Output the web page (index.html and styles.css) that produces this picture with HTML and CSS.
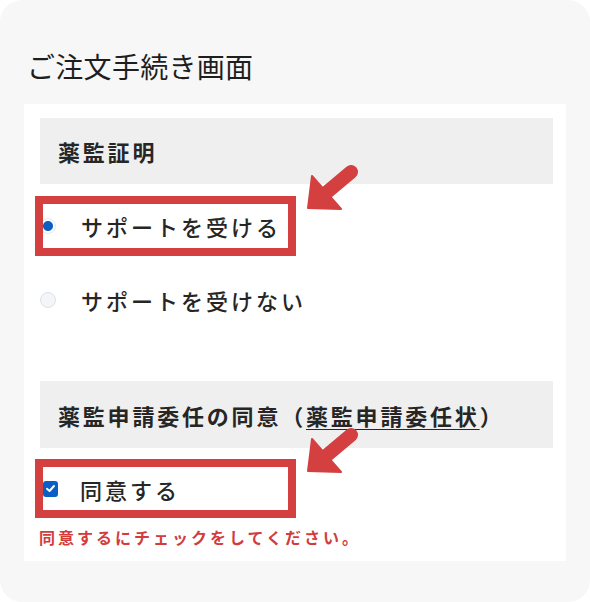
FILE: index.html
```html
<!DOCTYPE html>
<html lang="ja">
<head>
    <meta charset="UTF-8">
    <meta name="viewport" content="width=device-width, initial-scale=1.0">
    <title>ご注文手続き画面</title>
    <link rel="stylesheet" href="styles.css">
</head>
<body>
    <div class="screen">
        <h1 class="page-title">ご注文手続き画面</h1>

        <div class="panel">
            <!-- 薬監証明 -->
            <section class="block">
                <h2 class="block-title">薬監証明</h2>
                <label class="choice marked">
                    <input type="radio" name="support" class="radio" checked>
                    <span class="choice-text">サポートを受ける</span>
                    <svg class="pointer" width="54" height="50" viewBox="0 0 54 50">
                        <line x1="20" y1="30" x2="45" y2="9" stroke="#d43f3f" stroke-width="14" stroke-linecap="round"/>
                        <polygon points="2,45 6,13 35,46" fill="#d43f3f" stroke="#d43f3f" stroke-width="2" stroke-linejoin="round"/>
                    </svg>
                </label>
                <label class="choice">
                    <input type="radio" name="support" class="radio">
                    <span class="choice-text">サポートを受けない</span>
                </label>
            </section>

            <!-- 委任の同意 -->
            <section class="block block-agree">
                <h2 class="block-title">薬監申請委任の同意（<a href="#" class="doc-link">薬監申請委任状</a>）</h2>
                <label class="choice choice-check marked">
                    <span class="checkbox">
                        <svg width="11" height="11" viewBox="0 0 11 11">
                            <polyline points="2,5.8 4.5,8 9,3" fill="none" stroke="#fff" stroke-width="2" stroke-linecap="round" stroke-linejoin="round"/>
                        </svg>
                    </span>
                    <span class="choice-text">同意する</span>
                    <svg class="pointer" width="54" height="50" viewBox="0 0 54 50">
                        <line x1="20" y1="30" x2="45" y2="9" stroke="#d43f3f" stroke-width="14" stroke-linecap="round"/>
                        <polygon points="2,45 6,13 35,46" fill="#d43f3f" stroke="#d43f3f" stroke-width="2" stroke-linejoin="round"/>
                    </svg>
                </label>
                <p class="error">同意するにチェックをしてください。</p>
            </section>
        </div>
    </div>
</body>
</html>
```

FILE: styles.css
```css
:root {
    --text-color: #222;
    --screen-bg: #f7f7f7;
    --head-bg: #efefef;
    --mark-red: #d43f3f;
    --check-blue: #0b5ec4;
}

body {
    margin: 0;
    background: #fff;
    font-family: "Noto Sans CJK JP", "Noto Sans", sans-serif;
    color: var(--text-color);
}

.screen {
    width: 590px;
    height: 602px;
    box-sizing: border-box;
    padding-top: 46px;
    background: var(--screen-bg);
    border-radius: 22px;
    overflow: hidden;
}

.page-title {
    margin: 0 0 18px 27px;
    font-size: 28px;
    font-weight: 400;
    line-height: 40px;
    letter-spacing: 0.3px;
    color: #1e1e1e;
}

.panel {
    margin-left: 24px;
    width: 542px;
    box-sizing: border-box;
    padding: 14px 13px 14px 16px;
    background: #fff;
}

.block-agree {
    margin-top: 51px;
}

.block-title {
    margin: 0;
    height: 66px;
    display: flex;
    align-items: center;
    padding-left: 18px;
    background: var(--head-bg);
    font-size: 22px;
    font-weight: 700;
    letter-spacing: 2.8px;
    color: #262626;
}

.block-agree .block-title {
    height: 67px;
}

.doc-link {
    color: inherit;
    text-decoration: underline;
    text-underline-offset: 4px;
    text-decoration-thickness: 1px;
}

.choice {
    position: relative;
    display: flex;
    align-items: center;
    height: 60px;
    margin-top: 14px;
    cursor: pointer;
}

.block-title + .choice {
    margin-top: 12px;
}

.block-agree .block-title + .choice {
    margin-top: 11px;
    height: 59px;
}

.choice-text {
    margin-left: 25px;
    font-size: 22px;
    font-weight: 500;
    letter-spacing: 3px;
    color: #262626;
}

.radio {
    appearance: none;
    margin: 0;
    width: 16px;
    height: 16px;
    border-radius: 50%;
    border: 1px solid #dde1e7;
    background: #f4f5f7;
    box-sizing: border-box;
}

.radio:checked {
    border-color: #e3e8f0;
    background: radial-gradient(circle, var(--check-blue) 0 4.5px, #fff 5.5px);
}

.choice-check .choice-text {
    margin-left: 22px;
}

.checkbox {
    display: flex;
    align-items: center;
    justify-content: center;
    margin-left: 3px;
    width: 15px;
    height: 16px;
    border-radius: 3px;
    background: var(--check-blue);
}

/* red annotation frame and arrow */
.marked::before {
    content: "";
    position: absolute;
    left: -5px;
    top: 0;
    width: 261px;
    height: 100%;
    box-sizing: border-box;
    border: 8px solid var(--mark-red);
    pointer-events: none;
}

.pointer {
    position: absolute;
    left: 266px;
    top: -33px;
}

.error {
    margin: 9px 0 0 -1px;
    font-size: 16px;
    line-height: 20px;
    font-weight: 700;
    letter-spacing: 3px;
    color: #d23c3c;
}
```
